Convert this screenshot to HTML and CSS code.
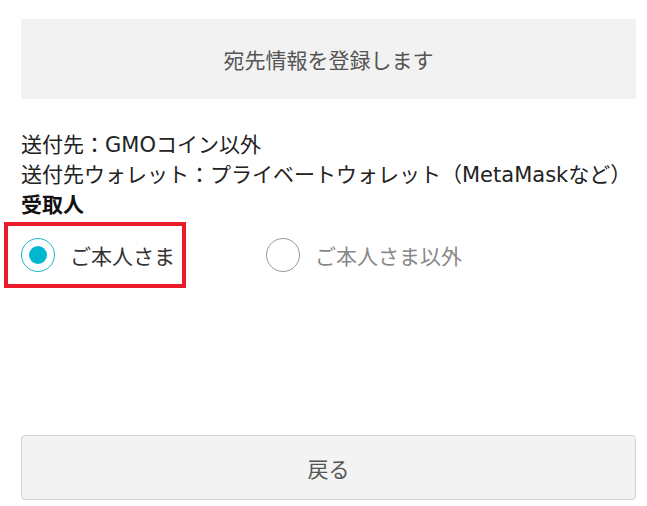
FILE: index.html
```html
<!DOCTYPE html>
<html lang="ja">
<head>
<meta charset="utf-8">
<link rel="stylesheet" href="styles.css">
</head>
<body>
<div class="page">
  <div class="banner">宛先情報を登録します</div>
  <div class="info">
    <p class="line">送付先：GMOコイン以外</p>
    <p class="line">送付先ウォレット：プライベートウォレット（MetaMaskなど）</p>
    <p class="line label-title">受取人</p>
  </div>
  <div class="radios">
    <div class="option option-highlight">
      <span class="radio radio-on"></span>
      <span class="opt-text">ご本人さま</span>
    </div>
    <div class="option">
      <span class="radio"></span>
      <span class="opt-text opt-off">ご本人さま以外</span>
    </div>
  </div>
  <div class="back">戻る</div>
</div>
</body>
</html>
```
FILE: styles.css
```css
html, body {
  margin: 0;
  padding: 0;
  background: #ffffff;
}
body {
  font-family: "DejaVu Sans", "Noto Sans CJK JP", sans-serif;
  font-size: 21px;
  color: #222;
}
.page {
  padding: 19px 11px 0 21px;
}
.banner {
  height: 80px;
  background: #f2f2f3;
  display: flex;
  align-items: center;
  justify-content: center;
  color: #555;
}
.info {
  margin-top: 31px;
}
.line {
  margin: 0;
  line-height: 30px;
  white-space: nowrap;
}
.label-title {
  font-weight: bold;
  color: #111;
}
.radios {
  display: flex;
  align-items: center;
  margin-top: 2px;
}
.option {
  display: flex;
  align-items: center;
  height: 58px;
}
.option-highlight {
  border: 4px solid #ea1c27;
  margin-left: -17px;
  padding: 0 7px 0 13px;
}
.option + .option {
  margin-left: 80px;
}
.radio {
  width: 34px;
  height: 34px;
  box-sizing: border-box;
  border: 1px solid #999;
  border-radius: 50%;
  display: flex;
  align-items: center;
  justify-content: center;
  flex: none;
}
.radio-on {
  border-color: #17b6c9;
}
.radio-on::after {
  content: "";
  width: 18px;
  height: 18px;
  border-radius: 50%;
  background: #00b7d1;
}
.opt-text {
  margin-left: 15px;
  color: #333;
}
.opt-off {
  color: #888;
}
.back {
  margin-top: 147px;
  height: 65px;
  box-sizing: border-box;
  border: 1px solid #d4d4d4;
  border-radius: 4px;
  background: #f3f3f3;
  display: flex;
  align-items: center;
  justify-content: center;
  color: #555;
}
```
